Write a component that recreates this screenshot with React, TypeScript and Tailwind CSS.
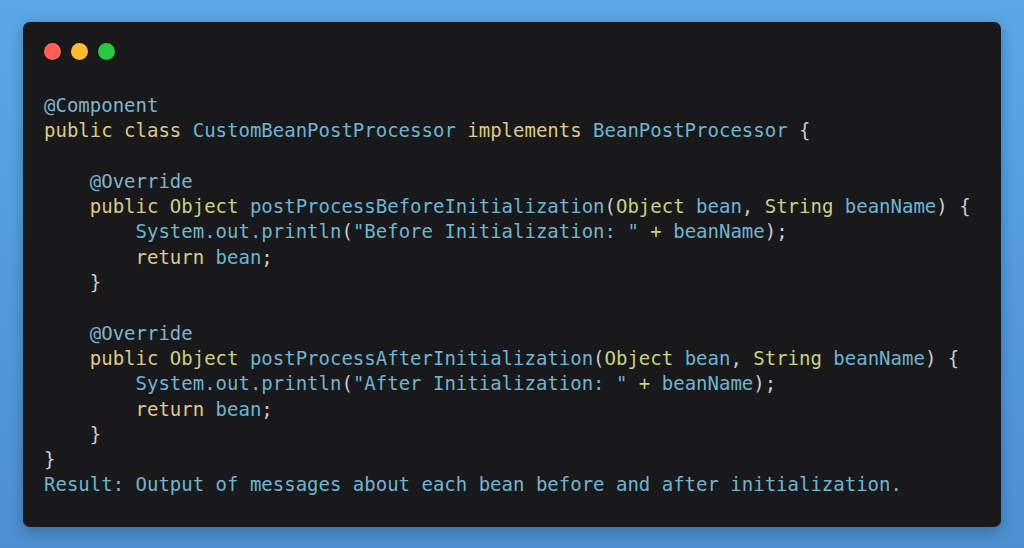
type Tok = [string, string]

const C = {
  ann: 'text-[#7fb3cf]',
  kw: 'text-[#dcc98b]',
  type: 'text-[#c8d184]',
  id: 'text-[#6fb4d2]',
  punc: 'text-[#c9ccd0]',
}

const lines: Tok[][] = [
  [['@Component', C.ann]],
  [
    ['public class ', C.kw],
    ['CustomBeanPostProcessor ', C.id],
    ['implements ', C.kw],
    ['BeanPostProcessor ', C.id],
    ['{', C.punc],
  ],
  [],
  [['    @Override', C.ann]],
  [
    ['    public ', C.kw],
    ['Object ', C.type],
    ['postProcessBeforeInitialization', C.id],
    ['(', C.punc],
    ['Object ', C.type],
    ['bean', C.id],
    [', ', C.punc],
    ['String ', C.type],
    ['beanName', C.id],
    [') {', C.punc],
  ],
  [
    ['        System.out.println', C.id],
    ['(', C.punc],
    ['"Before Initialization: "', C.id],
    [' + ', C.type],
    ['beanName', C.id],
    [');', C.punc],
  ],
  [
    ['        return ', C.kw],
    ['bean', C.id],
    [';', C.punc],
  ],
  [['    }', C.punc]],
  [],
  [['    @Override', C.ann]],
  [
    ['    public ', C.kw],
    ['Object ', C.type],
    ['postProcessAfterInitialization', C.id],
    ['(', C.punc],
    ['Object ', C.type],
    ['bean', C.id],
    [', ', C.punc],
    ['String ', C.type],
    ['beanName', C.id],
    [') {', C.punc],
  ],
  [
    ['        System.out.println', C.id],
    ['(', C.punc],
    ['"After Initialization: "', C.id],
    [' + ', C.type],
    ['beanName', C.id],
    [');', C.punc],
  ],
  [
    ['        return ', C.kw],
    ['bean', C.id],
    [';', C.punc],
  ],
  [['    }', C.punc]],
  [['}', C.punc]],
  [['Result: Output of messages about each bean before and after initialization.', C.id]],
]

export default function App() {
  return (
    <div className="h-[548px] w-full bg-gradient-to-b from-[#5aa6e6] to-[#4b8fd0] pl-[23px] pt-[22px]">
      <div className="h-[505px] w-[978px] rounded-[7px] bg-[#19191b] px-[21px] pt-[21px] shadow-[0_4px_14px_rgba(0,0,0,0.25)]">
        <div className="flex gap-[10px]">
          <span className="h-[17px] w-[17px] rounded-full bg-[#fe5f57]" />
          <span className="h-[17px] w-[17px] rounded-full bg-[#febc2e]" />
          <span className="h-[17px] w-[17px] rounded-full bg-[#28c840]" />
        </div>
        <pre className="mt-[33px] font-['DejaVu_Sans_Mono',monospace] text-[19px] leading-[25.3px]">
          {lines.map((toks, i) => (
            <div key={i} className="h-[25.3px]">
              {toks.map(([t, c], j) => (
                <span key={j} className={c}>
                  {t}
                </span>
              ))}
            </div>
          ))}
        </pre>
      </div>
    </div>
  )
}
